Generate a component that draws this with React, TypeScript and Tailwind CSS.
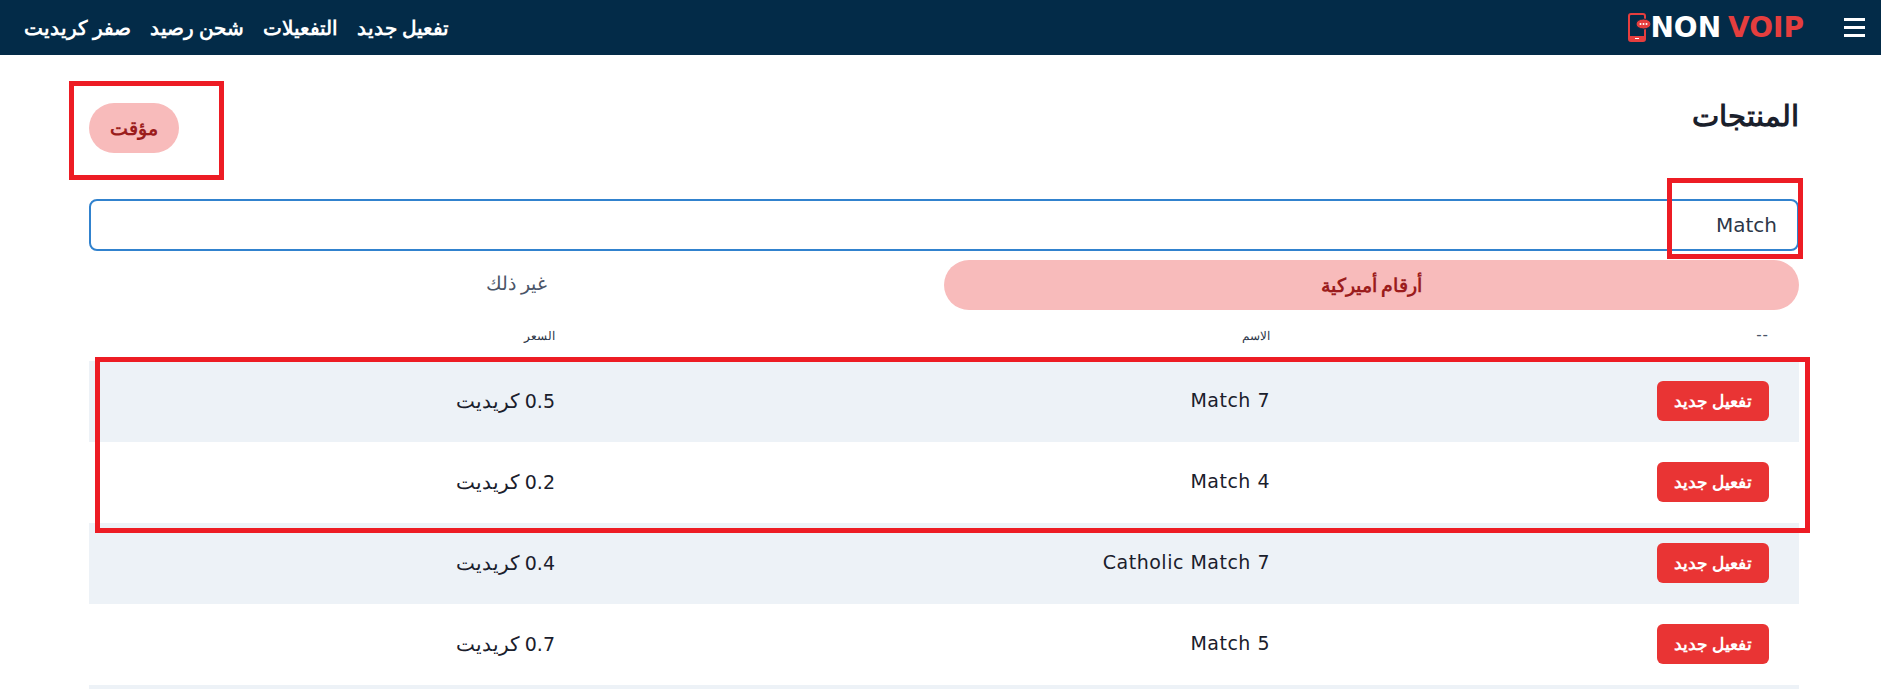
import React from 'react';

const rows = [
    { name: 'Match 7', price: '0.5' },
    { name: 'Match 4', price: '0.2' },
    { name: 'Catholic Match 7', price: '0.4' },
    { name: 'Match 5', price: '0.7' },
];

const navLinks = ['تفعيل جديد', 'التفعيلات', 'شحن رصيد', 'صفر كريديت'];

function Logo() {
    return (
        <div dir="ltr" className="flex items-center h-[55px] mr-[40px]">
            <svg width="24" height="30" viewBox="0 0 24 30" className="-mr-[2px]">
                <rect x="1" y="1" width="16" height="27" rx="2" fill="none" stroke="#e53e3e" strokeWidth="2" />
                <rect x="1" y="23" width="16" height="5" fill="#e53e3e" />
                <rect x="7" y="25" width="4" height="1" fill="#fff" />
                <ellipse cx="15.5" cy="11" rx="7.5" ry="5" fill="#e53e3e" stroke="#032b48" strokeWidth="1" />
                <circle cx="12.5" cy="11" r="1" fill="#fff" />
                <circle cx="15.5" cy="11" r="1" fill="#fff" />
                <circle cx="18.5" cy="11" r="1" fill="#fff" />
            </svg>
            <span className="font-['DejaVu_Sans',sans-serif] text-[28px] font-bold leading-none text-white">NON</span>
            <span className="font-['DejaVu_Sans',sans-serif] text-[28px] font-bold leading-none text-[#e53e3e] ml-[7px]">VOIP</span>
        </div>
    );
}

function Annotation({ className }: { className: string }) {
    return <div className={`absolute border-[5px] border-[#ed1c24] pointer-events-none ${className}`} />;
}

function Latin({ children }: { children: React.ReactNode }) {
    return <span className="font-['DejaVu_Sans',sans-serif] text-[19px] tracking-[0.5px]">{children}</span>;
}

export default function App() {
    return (
        <div dir="rtl" className="relative h-screen overflow-hidden bg-white text-[#1a202c] font-['Noto_Sans',sans-serif]">
            <nav className="flex items-center justify-between h-[55px] bg-[#032b48] pr-[16px] pl-[24px]">
                <div className="flex items-center">
                    <div className="flex flex-col gap-[5px] w-[21px]">
                        <span className="block h-[3px] bg-white" />
                        <span className="block h-[3px] bg-white" />
                        <span className="block h-[3px] bg-white" />
                    </div>
                    <Logo />
                </div>
                <div className="flex items-center gap-[19px] text-[19.6px] font-semibold text-white">
                    {navLinks.map(link => <a key={link} href="#">{link}</a>)}
                </div>
            </nav>

            <main className="pl-[89px] pr-[82px]">
                <div className="flex items-start justify-between pt-[48px] h-[144px]">
                    <h1 className="text-[29px] font-bold leading-[24px]">المنتجات</h1>
                    <button className="h-[50px] w-[90px] rounded-full bg-[#f8bbbb] text-[19px] font-semibold text-[#9b1c1c]">مؤقت</button>
                </div>

                <input
                    readOnly
                    value="Match"
                    className="block w-full h-[52px] rounded-lg border-2 border-[#3182ce] px-[20px] font-['DejaVu_Sans',sans-serif] text-[20px] text-[#2d3748] outline-none"
                />

                <div className="flex h-[50px] mt-[9px]">
                    <button className="w-1/2 rounded-full bg-[#f8bbbb] text-[18.5px] font-semibold text-[#9b1c1c]">أرقام أميركية</button>
                    <button className="w-1/2 pb-[4px] text-[19px] font-medium text-[#4a5568]">غير ذلك</button>
                </div>

                <table className="w-full table-fixed text-right">
                    <colgroup>
                        <col className="w-[499px]" />
                        <col className="w-[715px]" />
                        <col />
                    </colgroup>
                    <thead>
                        <tr className="h-[51px] text-[12px] text-[#2d3748]">
                            <th className="px-[30px] font-normal font-['DejaVu_Sans',sans-serif] text-[15px] tracking-[1px] text-[#4a5568]">--</th>
                            <th className="px-[30px] font-normal">الاسم</th>
                            <th className="px-[30px] font-normal">السعر</th>
                        </tr>
                    </thead>
                    <tbody>
                        {rows.map((row, i) => (
                            <tr key={row.name} className={`h-[81px] text-[20px] ${i % 2 === 0 ? 'bg-[#edf2f7]' : 'bg-white'}`}>
                                <td className="px-[30px] pb-[2px]">
                                    <button className="w-[112px] h-[40px] rounded-md bg-[#e93434] text-[17px] font-semibold text-white">تفعيل جديد</button>
                                </td>
                                <td className="px-[30px] pb-[3px]"><Latin>{row.name}</Latin></td>
                                <td className="px-[30px] pb-[2px]"><Latin>{row.price}</Latin> كريديت</td>
                            </tr>
                        ))}
                        <tr className="h-[81px] bg-[#edf2f7]"><td colSpan={3} /></tr>
                    </tbody>
                </table>
            </main>

            <Annotation className="left-[69px] top-[81px] w-[155px] h-[99px]" />
            <Annotation className="left-[1667px] top-[178px] w-[136px] h-[81px]" />
            <Annotation className="left-[95px] top-[357px] w-[1715px] h-[176px]" />
        </div>
    );
}
